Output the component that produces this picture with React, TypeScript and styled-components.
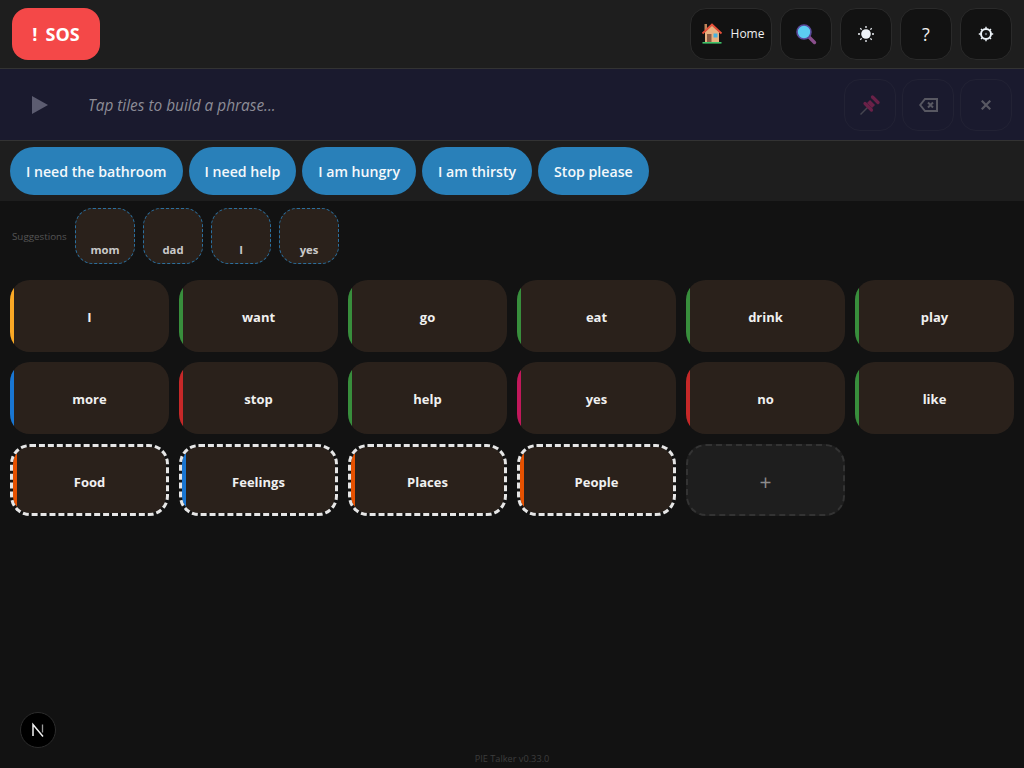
import React from 'react';
import styled, { createGlobalStyle } from 'styled-components';

const FONT = `"Open Sans", "Noto Sans", "Liberation Sans", sans-serif`;

const Global = createGlobalStyle`
  html, body { margin: 0; padding: 0; background: #121212; }
  body { font-family: ${FONT}; color: #f0f0f0; }
  * { box-sizing: border-box; }
`;

const Page = styled.div`
  position: relative;
  width: 1024px;
  height: 768px;
  overflow: hidden;
  display: flex;
  flex-direction: column;
  background: #121212;
`;

const Header = styled.header`
  height: 69px;
  flex: none;
  display: flex;
  align-items: center;
  justify-content: space-between;
  padding: 0 12px 1px;
  background: #1e1e1e;
  border-bottom: 1px solid #333;
`;

const SosButton = styled.button`
  width: 88px;
  height: 52px;
  border: none;
  border-radius: 16px;
  background: #f44848;
  color: #fff;
  font: 700 18px ${FONT};
  display: flex;
  align-items: center;
  justify-content: center;
  gap: 8px;
`;

const Tools = styled.nav`
  display: flex;
  gap: 8px;
`;

const ToolButton = styled.button<{ $wide?: boolean }>`
  width: ${(p) => (p.$wide ? '82px' : '52px')};
  height: 52px;
  padding: 0 0 0 ${(p) => (p.$wide ? '3px' : '0')};
  border: 1px solid #2a2a2a;
  border-radius: 16px;
  background: #121212;
  color: #f0f0f0;
  font: 400 12px ${FONT};
  display: flex;
  align-items: center;
  justify-content: center;
  gap: 8px;
`;

const Question = styled.span`
  font-size: 18px;
  line-height: 1;
`;

const PhraseBar = styled.section`
  height: 72px;
  flex: none;
  display: flex;
  align-items: center;
  padding: 0 12px 0 14px;
  background: #1a1a2e;
  border-bottom: 1px solid #333;
`;

const PlayButton = styled.div`
  width: 52px;
  height: 52px;
  flex: none;
  display: flex;
  align-items: center;
  justify-content: center;
`;

const Placeholder = styled.div`
  flex: 1;
  margin-left: 22px;
  padding-top: 1px;
  font-size: 15.4px;
  font-style: italic;
  color: #8c8c96;
`;

const PhraseActions = styled.div`
  display: flex;
  gap: 6px;
`;

const GhostButton = styled.div`
  width: 52px;
  height: 52px;
  border: 1px solid #222234;
  border-radius: 16px;
  display: flex;
  align-items: center;
  justify-content: center;
`;

const QuickRow = styled.section`
  height: 60px;
  flex: none;
  display: flex;
  align-items: flex-start;
  gap: 6px;
  padding: 6px 10px 0;
  background: #1e1e1e;
`;

const Pill = styled.button`
  height: 48px;
  padding: 0 16px;
  border: none;
  border-radius: 24px;
  background: #2980b9;
  color: #f4f8fb;
  font: 600 14.15px ${FONT};
`;

const SuggestRow = styled.section`
  height: 79px;
  flex: none;
  display: flex;
  align-items: flex-start;
  gap: 8px;
  padding: 7px 10px 0 12px;
`;

const SuggestLabel = styled.span`
  width: 55px;
  margin-top: 22px;
  font-size: 9.8px;
  line-height: 13px;
  white-space: nowrap;
  color: #555;
`;

const SuggestTile = styled.button`
  width: 60px;
  height: 56px;
  padding: 0 0 6px;
  border: 1px dashed #2b6f9e;
  border-radius: 18px;
  background: #2a211b;
  color: #c9c9c9;
  font: 700 11.3px ${FONT};
  display: flex;
  align-items: flex-end;
  justify-content: center;
`;

const Grid = styled.main`
  display: grid;
  grid-template-columns: repeat(6, 159px);
  grid-auto-rows: 72px;
  gap: 10px;
  padding: 0 10px;
`;

const Tile = styled.button<{ $accent: string; $folder?: boolean }>`
  height: 72px;
  padding: ${(p) => (p.$folder ? '4px' : '2px')} 0 0;
  border: ${(p) => (p.$folder ? '3px dashed #e6e6e6' : 'none')};
  border-radius: 20px;
  background: linear-gradient(to right, ${(p) => p.$accent} 4px, #2a211b 4px) padding-box;
  color: #f0f0f0;
  font: 700 13px ${FONT};
`;

const AddTile = styled.button`
  height: 72px;
  padding: 4px 0 0;
  border: 2px dashed #333;
  border-radius: 20px;
  background: #1e1e1e;
  color: #8c8c8c;
  font: 400 21px ${FONT};
`;

const Version = styled.footer`
  position: absolute;
  left: 0;
  right: 0;
  bottom: 3px;
  text-align: center;
  font-size: 9.2px;
  line-height: 12px;
  color: #3d3d3d;
`;

const DevBadge = styled.div`
  position: absolute;
  left: 20px;
  top: 712px;
  width: 36px;
  height: 36px;
  border-radius: 50%;
  background: #000;
  border: 1px solid #2c2c2c;
  display: flex;
  align-items: center;
  justify-content: center;
`;

const HomeIcon = () => (
  <svg width="22" height="22" viewBox="0 0 22 22">
    <rect x="3.5" y="1" width="2.5" height="6" fill="#c08458" />
    <path d="M4 9 11 2.5 18 9v10H4z" fill="#e8b180" />
    <path d="M1.5 10.5 11 1.5l9.5 9" fill="none" stroke="#e8503a" strokeWidth="1.8" />
    <rect x="6" y="11" width="4.5" height="8" fill="#8a5a44" />
    <rect x="12.5" y="10.5" width="4" height="4" fill="#45b3e0" />
    <rect x="1.5" y="19" width="19" height="1.6" fill="#3fc46a" />
  </svg>
);

const SearchIcon = () => (
  <svg width="22" height="22" viewBox="0 0 22 22">
    <line x1="14" y1="14" x2="19.5" y2="19.5" stroke="#8a4f8c" strokeWidth="3.4" strokeLinecap="round" />
    <circle cx="9" cy="9" r="7" fill="#5ccdf2" stroke="#5b4a9c" strokeWidth="1.6" />
  </svg>
);

const SunIcon = () => (
  <svg width="16" height="16" viewBox="0 0 16 16" stroke="#eef2f7" strokeWidth="1.3">
    <circle cx="8" cy="8" r="4.8" fill="#eef2f7" stroke="none" />
    <path d="M8 0v2M8 14v2M0 8h2M14 8h2M2.300 2.300 3.600 3.600M12.400 12.400l1.300 1.300M2.300 13.700 3.600 12.400M12.400 3.600l1.300-1.300" />
  </svg>
);

const GearIcon = () => (
  <svg width="16" height="16" viewBox="0 0 16 16" fill="none" stroke="#eef4fa">
    <circle cx="8" cy="8" r="5" strokeWidth="2" />
    <circle cx="8" cy="8" r="1.200" fill="#6a7078" stroke="none" />
    <path
      d="M8 .8v1.700M8 13.500v1.700M.8 8h1.700M13.500 8h1.700M3 3l1 1M12 12l1 1M3 13l1-1M12 4l1-1"
      strokeWidth="1.400"
    />
  </svg>
);

const PlayIcon = () => (
  <svg width="16" height="18" viewBox="0 0 16 18">
    <path d="M0 0 16 9 0 18z" fill="#5c5c70" />
  </svg>
);

const PinIcon = () => (
  <svg width="20" height="20" viewBox="0 0 20 20" fill="none">
    <path d="M.5 19.500 7.500 12.500" stroke="#45454f" strokeWidth="1.400" />
    <path d="M12.500 2 18 7.500" stroke="#6a2148" strokeWidth="3.200" strokeLinecap="round" />
    <path d="M10 5 15 10 12 13 7 8z" fill="#6a2148" />
    <path d="M5 8.500 11.500 15" stroke="#6a2148" strokeWidth="3.200" strokeLinecap="round" />
  </svg>
);

const BackspaceIcon = () => (
  <svg width="19" height="14" viewBox="0 0 19 14" fill="none" stroke="#585862" strokeWidth="2">
    <path d="M6 1h12v12H6L1.200 7z" />
    <path d="m9 4.500 5 5M14 4.500l-5 5" />
  </svg>
);

const CloseIcon = () => (
  <svg width="10" height="10" viewBox="0 0 10 10" stroke="#585862" strokeWidth="2.200">
    <path d="m.7.7 8.600 8.600M9.300.7.7 9.300" />
  </svg>
);

const NextLogo = () => (
  <svg width="18" height="18" viewBox="0 0 18 18" fill="none">
    <path d="M4 15V3.500l10 12" stroke="#f2f2f2" strokeWidth="1.500" />
    <path d="M13.500 3.500v8" stroke="#9a9a9a" strokeWidth="1.300" />
  </svg>
);

const phrases = ['I need the bathroom', 'I need help', 'I am hungry', 'I am thirsty', 'Stop please'];
const suggestions = ['mom', 'dad', 'I', 'yes'];
const words: [string, string][] = [
  ['I', '#f9a825'],
  ['want', '#388e3c'],
  ['go', '#388e3c'],
  ['eat', '#388e3c'],
  ['drink', '#388e3c'],
  ['play', '#388e3c'],
  ['more', '#1976d2'],
  ['stop', '#c62828'],
  ['help', '#388e3c'],
  ['yes', '#c2185b'],
  ['no', '#c62828'],
  ['like', '#388e3c'],
];
const folders: [string, string][] = [
  ['Food', '#e65100'],
  ['Feelings', '#1976d2'],
  ['Places', '#e65100'],
  ['People', '#e65100'],
];

export default function App() {
  return (
    <Page>
      <Global />
      <Header>
        <SosButton>
          <span>!</span>
          <span>SOS</span>
        </SosButton>
        <Tools>
          <ToolButton $wide>
            <HomeIcon />
            Home
          </ToolButton>
          <ToolButton><SearchIcon /></ToolButton>
          <ToolButton><SunIcon /></ToolButton>
          <ToolButton><Question>?</Question></ToolButton>
          <ToolButton><GearIcon /></ToolButton>
        </Tools>
      </Header>
      <PhraseBar>
        <PlayButton><PlayIcon /></PlayButton>
        <Placeholder>Tap tiles to build a phrase...</Placeholder>
        <PhraseActions>
          <GhostButton><PinIcon /></GhostButton>
          <GhostButton><BackspaceIcon /></GhostButton>
          <GhostButton><CloseIcon /></GhostButton>
        </PhraseActions>
      </PhraseBar>
      <QuickRow>
        {phrases.map((p) => <Pill key={p}>{p}</Pill>)}
      </QuickRow>
      <SuggestRow>
        <SuggestLabel>Suggestions</SuggestLabel>
        {suggestions.map((s) => <SuggestTile key={s}>{s}</SuggestTile>)}
      </SuggestRow>
      <Grid>
        {words.map(([w, c]) => <Tile key={w} $accent={c}>{w}</Tile>)}
        {folders.map(([w, c]) => <Tile key={w} $accent={c} $folder>{w}</Tile>)}
        <AddTile>+</AddTile>
      </Grid>
      <Version>PIE Talker v0.33.0</Version>
      <DevBadge><NextLogo /></DevBadge>
    </Page>
  );
}
